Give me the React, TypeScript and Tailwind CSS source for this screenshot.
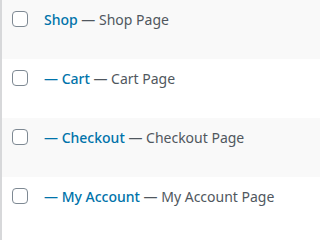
const rows = [
  { prefix: "", title: "Shop", state: "Shop Page" },
  { prefix: "— ", title: "Cart", state: "Cart Page" },
  { prefix: "— ", title: "Checkout", state: "Checkout Page" },
  { prefix: "— ", title: "My Account", state: "My Account Page" },
];

export default function App() {
  return (
    <div
      className="w-[320px] h-[240px] overflow-hidden bg-white border-l-2 border-[#d7d8da]"
      style={{ fontFamily: '"Noto Sans", "Open Sans", sans-serif' }}
    >
      {rows.map((row, i) => (
        <div
          key={row.title}
          className={`flex items-start h-[59px] ${i % 2 === 0 ? "bg-[#f9f9f9]" : "bg-white"}`}
        >
          <div className="pl-[10px] pt-[11px] w-[42px]">
            <span className="block w-4 h-4 rounded-[4px] border border-[#7e8993] bg-white" />
          </div>
          <div className="pt-[10px] text-[14px] leading-[20px] text-[#50575e] whitespace-nowrap">
            {row.prefix && <span className="text-[#0073aa]">{row.prefix}</span>}
            <a className="text-[#0073aa] font-medium">{row.title}</a>
            <span> — {row.state}</span>
          </div>
        </div>
      ))}
    </div>
  );
}
